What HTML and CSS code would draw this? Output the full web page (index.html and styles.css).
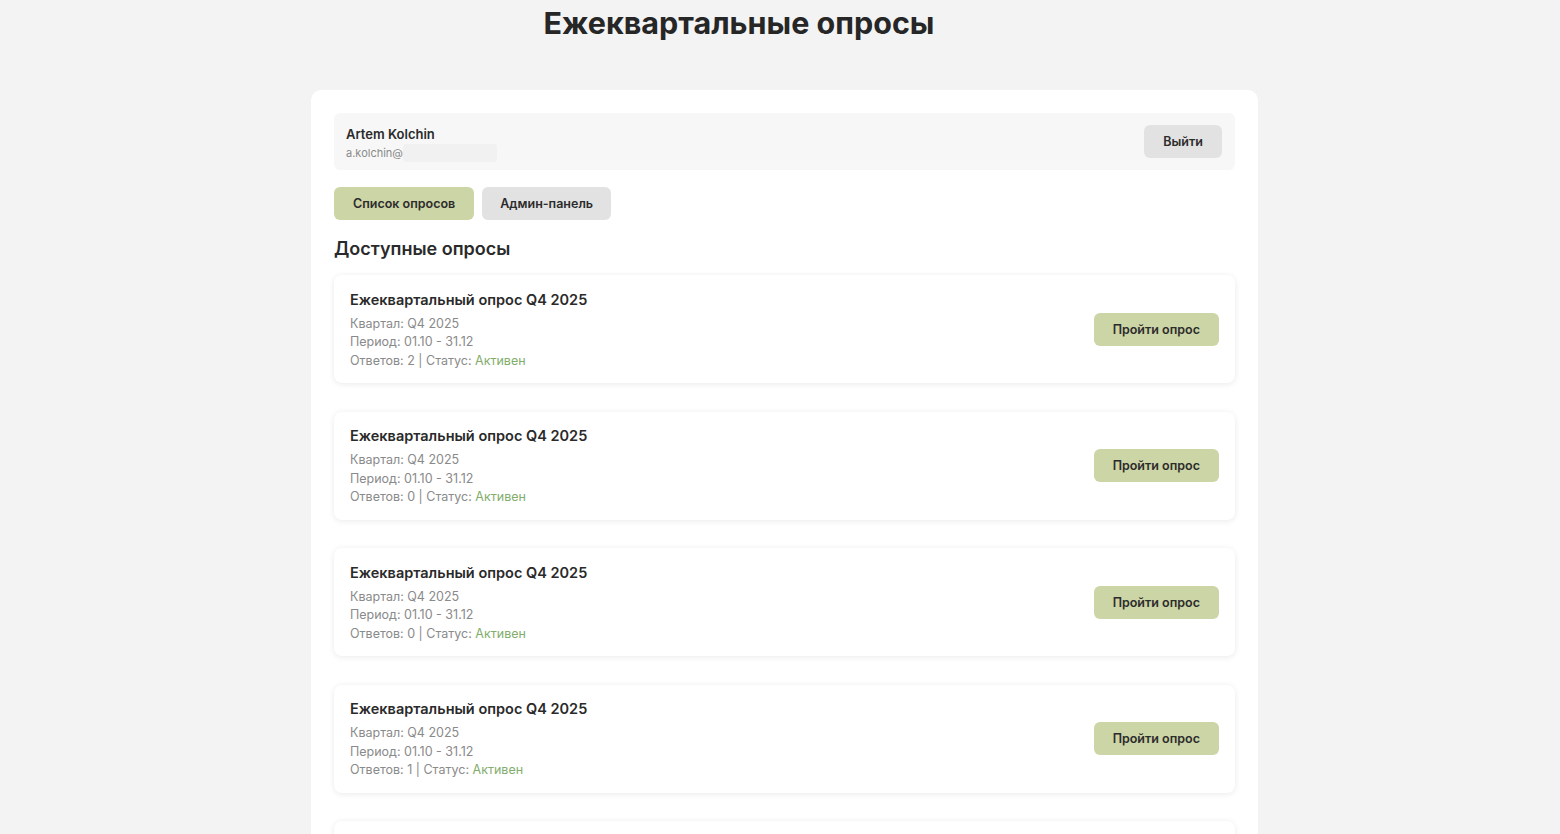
FILE: index.html
```html
<!DOCTYPE html>
<html lang="ru">
<head>
  <meta charset="UTF-8" />
  <title>Ежеквартальные опросы</title>
  <link rel="stylesheet" href="styles.css">
</head>
<body>

  <header class="page-title">
    <h1>Ежеквартальные опросы</h1>
  </header>

  <div class="container">
    <!-- USER BAR -->
    <div class="user-bar">
      <div class="user-info">
        <div class="user-name">Artem Kolchin</div>
        <div class="user-email">a.kolchin@<span class="blur"></span></div>
      </div>
      <button class="btn btn-grey">Выйти</button>
    </div>

    <!-- TABS -->
    <div class="tabs">
      <button class="btn btn-green">Список опросов</button>
      <button class="btn btn-grey">Админ-панель</button>
    </div>

    <h2>Доступные опросы</h2>

    <div class="survey-list">
      <div class="survey">
        <div class="survey-info">
          <h3>Ежеквартальный опрос Q4 2025</h3>
          <p>Квартал: Q4 2025</p>
          <p>Период: 01.10 - 31.12</p>
          <p>Ответов: 2 | Статус: <span class="status">Активен</span></p>
        </div>
        <button class="btn btn-green">Пройти опрос</button>
      </div>

      <div class="survey">
        <div class="survey-info">
          <h3>Ежеквартальный опрос Q4 2025</h3>
          <p>Квартал: Q4 2025</p>
          <p>Период: 01.10 - 31.12</p>
          <p>Ответов: 0 | Статус: <span class="status">Активен</span></p>
        </div>
        <button class="btn btn-green">Пройти опрос</button>
      </div>

      <div class="survey">
        <div class="survey-info">
          <h3>Ежеквартальный опрос Q4 2025</h3>
          <p>Квартал: Q4 2025</p>
          <p>Период: 01.10 - 31.12</p>
          <p>Ответов: 0 | Статус: <span class="status">Активен</span></p>
        </div>
        <button class="btn btn-green">Пройти опрос</button>
      </div>

      <div class="survey">
        <div class="survey-info">
          <h3>Ежеквартальный опрос Q4 2025</h3>
          <p>Квартал: Q4 2025</p>
          <p>Период: 01.10 - 31.12</p>
          <p>Ответов: 1 | Статус: <span class="status">Активен</span></p>
        </div>
        <button class="btn btn-green">Пройти опрос</button>
      </div>

      <!-- last card only peeks in at the bottom of the screen -->
      <div class="survey"></div>
    </div>
  </div>

</body>
</html>
```

FILE: styles.css
```css
:root {
  --bg: #f3f3f3;
  --text: #2a2a2a;
  --muted: #8a8a8a;
  --box: #fff;
  --soft: #f7f7f7;
  --green: #ccd5a5;
  --grey: #e2e2e2;
  --active: #82ad6c;
}

body {
  font-family: Inter, "Noto Sans", sans-serif;
  background-color: var(--bg);
  color: var(--text);
  margin: 0;
  padding: 0;
}

.page-title {
  padding-right: 82px;
  text-align: center;
}

.page-title h1 {
  margin: 0;
  padding-top: 4px;
  height: 86px;
  font-size: 30.5px;
  font-weight: 700;
  line-height: 38px;
  color: #262626;
}

.container {
  width: 901px;
  margin-left: 311px;
  padding: 23px 23px 40px;
  background: var(--box);
  border-radius: 10px;
}

.user-bar {
  display: flex;
  align-items: center;
  justify-content: space-between;
  background: var(--soft);
  border-radius: 6px;
  padding: 0 13px 0 12px;
  height: 57px;
}

.user-info {
  padding-top: 4px;
}

.user-name {
  font-size: 13px;
  font-weight: 600;
  line-height: 16px;
}

.user-email {
  display: flex;
  align-items: center;
  font-size: 11px;
  color: var(--muted);
  line-height: 18px;
  margin-top: 2px;
}

.blur {
  display: inline-block;
  width: 94px;
  height: 18px;
  background: #f1f1f1;
  border-radius: 3px;
}

.btn {
  border: none;
  border-radius: 6px;
  font-family: inherit;
  font-size: 12.5px;
  font-weight: 600;
  color: #2c2c2c;
  height: 33px;
  padding: 0 19px;
  cursor: pointer;
}

.btn-green {
  background: var(--green);
}

.btn-grey {
  background: var(--grey);
}

.tabs {
  display: flex;
  gap: 8px;
  margin-top: 17px;
}

.tabs .btn-grey {
  padding: 0 18px;
}

h2 {
  font-size: 18px;
  font-weight: 600;
  margin: 16px 0 14px;
  line-height: 25px;
}

.survey-list {
  display: flex;
  flex-direction: column;
  gap: 28.5px;
}

.survey {
  display: flex;
  align-items: center;
  justify-content: space-between;
  height: 108px;
  box-sizing: border-box;
  padding: 0 16px;
  background: var(--box);
  border-radius: 8px;
  box-shadow: 0 1px 6px rgba(0, 0, 0, 0.09);
}

.survey-info {
  padding-top: 2px;
}

.survey h3 {
  font-size: 14.5px;
  font-weight: 600;
  margin: 0 0 5px;
  line-height: 20px;
}

.survey p {
  margin: 0;
  font-size: 12.5px;
  line-height: 18.5px;
  color: var(--muted);
}

.status {
  color: var(--active);
}
```
